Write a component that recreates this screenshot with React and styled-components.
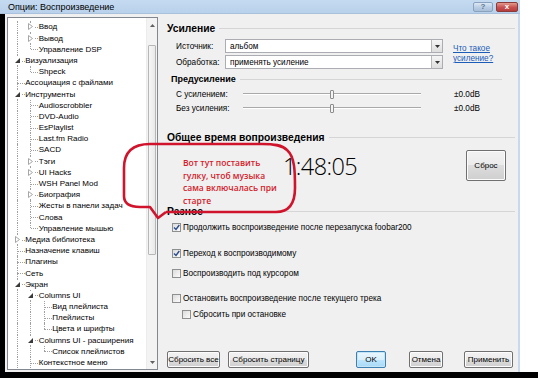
import React from 'react';
import styled, { createGlobalStyle } from 'styled-components';

const GlobalStyle = createGlobalStyle`
  html, body {
    margin: 0;
    padding: 0;
    background: #ffffff;
  }
  body {
    font-family: "Liberation Sans", Arial, sans-serif;
    color: #000;
  }
`;

const Page = styled.div`
  position: relative;
  width: 538px;
  height: 378px;
  display: flex;
  flex-direction: column;
  overflow: hidden;
  background: #fff;
`;

const Upper = styled.div`
  display: flex;
  height: 372px;
`;

const Outside = styled.div`
  flex: 1;
  background: #ffffff;
`;

const BottomBar = styled.div`
  height: 6px;
  background: #000;
`;

const Window = styled.div`
  width: 520px;
  display: flex;
  flex-direction: column;
  background: #f0f0f0;
`;

const TitleBar = styled.div`
  height: 14px;
  box-sizing: border-box;
  display: flex;
  align-items: center;
  padding: 0 2px 0 8px;
  background: linear-gradient(#c4daf1, #b9d1ea);
  border-bottom: 1px solid #a9c1db;
  font-size: 9px;
`;

const Title = styled.span`
  flex: 1;
`;

const CaptionButton = styled.div`
  width: ${(p) => (p.$close ? 22 : 20)}px;
  height: 10px;
  margin-left: ${(p) => (p.$close ? 3 : 0)}px;
  box-sizing: border-box;
  border: 1px solid ${(p) => (p.$close ? '#8b3a3a' : '#8aa2bd')};
  border-radius: 2px;
  background: ${(p) =>
    p.$close
      ? 'linear-gradient(#e29a8c, #c75050 55%, #b73d3d)'
      : 'linear-gradient(#dce8f5, #b9cde3 55%, #a9bfd8)'};
  color: ${(p) => (p.$close ? '#fff' : '#5d7590')};
  font-size: 8px;
  font-weight: bold;
  line-height: 8px;
  text-align: center;
`;

const Body = styled.div`
  flex: 1;
  display: flex;
  min-height: 0;
`;

const LeftEdge = styled.div`
  width: 5px;
  background: #000;
`;

const TreePanel = styled.div`
  margin: 3px 0 2px 2px;
  width: 151px;
  box-sizing: border-box;
  border: 1px solid #828790;
  background: #fff;
  display: flex;
`;

const TreeList = styled.div`
  flex: 1;
  padding: 3.4px 0 0 2.25px;
  overflow: hidden;
  font-size: 8px;
`;

const TreeRow = styled.div`
  display: flex;
  height: 11.2px;
`;

const Cell = styled.div`
  position: relative;
  width: 13.5px;
  flex-shrink: 0;
  display: flex;
  align-items: center;
  justify-content: center;

  &::before {
    content: '';
    display: ${(p) => (p.$up || p.$down ? 'block' : 'none')};
    position: absolute;
    left: 6.5px;
    top: ${(p) => (p.$up ? '0' : '50%')};
    bottom: ${(p) => (p.$down ? '0' : '50%')};
    border-left: 1px dotted #a0a0a0;
  }

  &::after {
    content: '';
    display: ${(p) => (p.$stub ? 'block' : 'none')};
    position: absolute;
    left: 7px;
    right: -1px;
    top: 50%;
    border-top: 1px dotted #a0a0a0;
  }
`;

const Expander = styled.span`
  position: relative;
  z-index: 1;
  display: flex;
  align-items: center;
  justify-content: center;
  width: 7px;
  height: 8px;
  background: #fff;
`;

const NodeLabel = styled.span`
  padding-left: 1.5px;
  line-height: 11.2px;
  white-space: nowrap;
`;

const Scrollbar = styled.div`
  width: 10px;
  background: #f3f3f3;
  border-left: 1px solid #ececec;
  display: flex;
  flex-direction: column;
  align-items: center;
`;

const ScrollArrow = styled.div`
  height: 14px;
  display: flex;
  align-items: center;
  justify-content: center;
`;

const ScrollThumb = styled.div`
  margin-top: 13px;
  width: 8px;
  height: 210px;
  box-sizing: border-box;
  border: 1px solid #b7b7b7;
  border-radius: 1px;
  background: linear-gradient(90deg, #f6f6f6, #e9e9e9);
`;

const ScrollSpacer = styled.div`
  flex: 1;
`;

const Content = styled.div`
  flex: 1;
  display: flex;
  flex-direction: column;
  padding: 8px 3px 4px 9px;
  border-right: 2px solid #c6d9ee;
  font-size: 8.2px;
`;

const GroupHeader = styled.div`
  display: flex;
  align-items: center;
  gap: 4px;
  height: 12px;
  margin: ${(p) => (p.$sub ? '0 13px 0 4px' : '0')};
  margin-top: ${(p) => p.$top || 0}px;
  font-weight: bold;
  font-size: ${(p) => (p.$sub ? 9 : 10.3)}px;
  white-space: nowrap;

  &::after {
    content: '';
    flex: 1;
    height: 1px;
    background: #d5d5d5;
  }
`;

const SourceBlock = styled.div`
  display: flex;
  align-items: center;
  margin: 5px 0 0 9px;
`;

const ComboColumn = styled.div`
  display: flex;
  flex-direction: column;
  gap: 2px;
`;

const FieldRow = styled.div`
  display: flex;
  align-items: center;
  height: ${(p) => p.$h || 14}px;
  margin-top: ${(p) => p.$top || 0}px;
  margin-left: ${(p) => p.$left || 0}px;
`;

const FieldLabel = styled.span`
  width: ${(p) => p.$w}px;
  flex-shrink: 0;
  white-space: nowrap;
`;

const Combo = styled.div`
  width: 218px;
  height: 14px;
  box-sizing: border-box;
  border: 1px solid #abadb3;
  background: #fff;
  display: flex;
  align-items: center;
`;

const ComboText = styled.span`
  flex: 1;
  padding-left: 4px;
`;

const ComboButton = styled.span`
  width: 11px;
  height: 100%;
  box-sizing: border-box;
  border-left: 1px solid #b8b8b8;
  background: linear-gradient(#f5f5f5, #dedede);
  display: flex;
  align-items: center;
  justify-content: center;
`;

const HelpLink = styled.a`
  margin-left: 10px;
  color: #1b5cb8;
  text-decoration: underline;
  line-height: 10.5px;
  font-size: 8.2px;
`;

const Track = styled.div`
  width: 178px;
  height: 10px;
  display: flex;
  align-items: center;
  justify-content: center;
  background: linear-gradient(
    transparent 4px,
    #a9a9a9 4px,
    #a9a9a9 5px,
    #ffffff 5px,
    #ffffff 6px,
    transparent 6px
  );
`;

const Thumb = styled.div`
  width: 4px;
  height: 9px;
  box-sizing: border-box;
  border: 1px solid #8c8c8c;
  border-radius: 1px;
  background: #f4f4f4;
`;

const Value = styled.span`
  margin-left: 33px;
`;

const TimeRow = styled.div`
  display: flex;
  align-items: center;
  height: 31px;
  margin-top: 7px;
`;

const TimeText = styled.span`
  margin-left: 116px;
  font-family: "Open Sans", "Liberation Sans", sans-serif;
  font-weight: 300;
  font-size: 23.5px;
  letter-spacing: -0.6px;
`;

const Button = styled.button`
  width: ${(p) => p.$w}px;
  height: ${(p) => p.$h || 17}px;
  margin-left: ${(p) => (p.$auto ? 'auto' : `${p.$gap || 0}px`)};
  margin-right: ${(p) => p.$right || 0}px;
  padding: 0;
  box-sizing: border-box;
  border: 1px solid ${(p) => (p.$primary ? '#3c7fb1' : '#707070')};
  border-radius: 2px;
  background: ${(p) =>
    p.$primary
      ? 'linear-gradient(#eaf6fd, #d9f0fc 50%, #bee6fd 50%, #a7d9f5)'
      : 'linear-gradient(#f2f2f2, #ebebeb 50%, #dddddd 50%, #cfcfcf)'};
  box-shadow: inset 0 0 0 1px ${(p) => (p.$primary ? '#c4e5f6' : '#fcfcfc')};
  font-family: "Liberation Sans", Arial, sans-serif;
  font-size: 8px;
  white-space: nowrap;
  color: #000;
`;

const CheckRow = styled.div`
  display: flex;
  align-items: center;
  gap: 2px;
  height: 10px;
  margin-top: ${(p) => p.$top}px;
  margin-left: ${(p) => (p.$indent ? 15 : 5)}px;
  white-space: nowrap;
`;

const Box = styled.span`
  width: 9px;
  height: 9px;
  box-sizing: border-box;
  border: 1px solid #8e8f8f;
  background: linear-gradient(135deg, #dcdcdc, #fbfbfb);
  display: flex;
  align-items: center;
  justify-content: center;
  flex-shrink: 0;
`;

const ButtonBar = styled.div`
  display: flex;
  margin-top: auto;
`;

const Note = styled.div`
  position: absolute;
  left: 183px;
  top: 157px;
  font-family: "Open Sans", "Liberation Sans", sans-serif;
  font-weight: 600;
  font-size: 8.5px;
  line-height: 12.6px;
  color: #d4202a;
  white-space: nowrap;
`;

const Scribble = styled.svg`
  position: absolute;
  left: 0;
  top: 0;
  pointer-events: none;
`;

const rows = [
  [1, 'Ввод', 'closed'],
  [1, 'Вывод', 'closed'],
  [1, 'Управление DSP'],
  [0, 'Визуализация', 'open'],
  [1, 'Shpeck'],
  [0, 'Ассоциация с файлами'],
  [0, 'Инструменты', 'open'],
  [1, 'Audioscrobbler'],
  [1, 'DVD-Audio'],
  [1, 'EsPlaylist'],
  [1, 'Last.fm Radio'],
  [1, 'SACD'],
  [1, 'Тэги', 'closed'],
  [1, 'UI Hacks', 'closed'],
  [1, 'WSH Panel Mod'],
  [1, 'Биография', 'closed'],
  [1, 'Жесты в панели задач'],
  [1, 'Слова'],
  [1, 'Управление мышью'],
  [0, 'Медиа библиотека', 'closed'],
  [0, 'Назначение клавиш'],
  [0, 'Плагины'],
  [0, 'Сеть'],
  [0, 'Экран', 'open'],
  [1, 'Columns UI', 'open'],
  [2, 'Вид плейлиста'],
  [2, 'Плейлисты'],
  [2, 'Цвета и шрифты'],
  [1, 'Columns UI - расширения', 'open'],
  [2, 'Список плейлистов'],
  [1, 'Контекстное меню'],
];

// rows below the visible part, only so the guide lines run on
const levels = [...rows.map((r) => r[0]), 1, 0];

const continues = (i, d) => {
  for (let j = i + 1; j < levels.length; j++) {
    if (levels[j] < d) return false;
    if (levels[j] === d) return true;
  }
  return false;
};

const Triangle = ({ state }) =>
  state === 'open' ? (
    <svg width="5" height="5" viewBox="0 0 5 5">
      <path d="M5 0 L5 5 L0 5 Z" fill="#3a3a3a" />
    </svg>
  ) : (
    <svg width="5" height="7" viewBox="0 0 5 7">
      <path d="M0.5 0.5 L4.5 3.5 L0.5 6.5 Z" fill="none" stroke="#a6a6a6" strokeWidth="1" />
    </svg>
  );

const Arrow = ({ down }) => (
  <svg width="5" height="3" viewBox="0 0 5 3">
    <path d={down ? 'M0 0 L5 0 L2.5 3 Z' : 'M0 3 L5 3 L2.5 0 Z'} fill="#606060" />
  </svg>
);

const DropArrow = () => (
  <svg width="5" height="3" viewBox="0 0 5 3">
    <path d="M0 0 L5 0 L2.5 3 Z" fill="#333" />
  </svg>
);

const Tick = () => (
  <svg width="7" height="7" viewBox="0 0 7 7">
    <path d="M1 3.5 L3 5.5 L6.3 1" fill="none" stroke="#2a4d8f" strokeWidth="1.4" />
  </svg>
);

const Check = ({ checked, indent, top, children }) => (
  <CheckRow $indent={indent} $top={top}>
    <Box>{checked && <Tick />}</Box>
    <span>{children}</span>
  </CheckRow>
);

const Tree = () => (
  <TreePanel>
    <TreeList>
      {rows.map(([level, text, exp], i) => (
        <TreeRow key={text}>
          {Array.from({ length: level + 1 }, (_, d) => {
            const own = d === level;
            const down = continues(i, d);
            return (
              <Cell key={d} $up={own || down} $down={down} $stub={own}>
                {own && exp && (
                  <Expander>
                    <Triangle state={exp} />
                  </Expander>
                )}
              </Cell>
            );
          })}
          <NodeLabel>{text}</NodeLabel>
        </TreeRow>
      ))}
    </TreeList>
    <Scrollbar>
      <ScrollArrow>
        <Arrow />
      </ScrollArrow>
      <ScrollThumb />
      <ScrollSpacer />
      <ScrollArrow>
        <Arrow down />
      </ScrollArrow>
    </Scrollbar>
  </TreePanel>
);

const App = () => (
  <>
    <GlobalStyle />
    <Page>
      <Upper>
        <Window>
          <TitleBar>
            <Title>Опции: Воспроизведение</Title>
            <CaptionButton>?</CaptionButton>
            <CaptionButton $close>x</CaptionButton>
          </TitleBar>
          <Body>
            <LeftEdge />
            <Tree />
            <Content>
              <GroupHeader>Усиление</GroupHeader>
              <SourceBlock>
                <ComboColumn>
                  <FieldRow>
                    <FieldLabel $w={49}>Источник:</FieldLabel>
                    <Combo>
                      <ComboText>альбом</ComboText>
                      <ComboButton>
                        <DropArrow />
                      </ComboButton>
                    </Combo>
                  </FieldRow>
                  <FieldRow>
                    <FieldLabel $w={49}>Обработка:</FieldLabel>
                    <Combo>
                      <ComboText>применять усиление</ComboText>
                      <ComboButton>
                        <DropArrow />
                      </ComboButton>
                    </Combo>
                  </FieldRow>
                </ComboColumn>
                <HelpLink>
                  Что такое
                  <br />
                  усиление?
                </HelpLink>
              </SourceBlock>

              <GroupHeader $sub $top={4}>
                Предусиление
              </GroupHeader>
              <FieldRow $h={10} $top={4} $left={9}>
                <FieldLabel $w={67}>С усилением:</FieldLabel>
                <Track>
                  <Thumb />
                </Track>
                <Value>±0.0dB</Value>
              </FieldRow>
              <FieldRow $h={10} $top={4} $left={9}>
                <FieldLabel $w={67}>Без усиления:</FieldLabel>
                <Track>
                  <Thumb />
                </Track>
                <Value>±0.0dB</Value>
              </FieldRow>

              <GroupHeader $top={18}>Общее время вопроизведения</GroupHeader>
              <TimeRow>
                <TimeText>1:48:05</TimeText>
                <Button $w={40} $h={31} $auto $right={9}>
                  Сброс
                </Button>
              </TimeRow>

              <GroupHeader $top={24}>Разное</GroupHeader>
              <Check checked top={5}>
                Продолжить воспроизведение после перезапуска foobar200
              </Check>
              <Check checked top={16}>
                Переход к воспроизводимому
              </Check>
              <Check top={10}>Воспроизводить под курсором</Check>
              <Check top={15}>Остановить воспроизведение после текущего трека</Check>
              <Check indent top={6}>
                Сбросить при остановке
              </Check>

              <ButtonBar>
                <Button $w={53}>Сбросить все</Button>
                <Button $w={81} $gap={8}>
                  Сбросить страницу
                </Button>
                <Button $w={30} $auto $primary>
                  OK
                </Button>
                <Button $w={34} $gap={23}>
                  Отмена
                </Button>
                <Button $w={49} $gap={21} $right={2}>
                  Применить
                </Button>
              </ButtonBar>
            </Content>
          </Body>
        </Window>
        <Outside />
      </Upper>
      <BottomBar />
      <Scribble width="538" height="378">
        <path
          d="M166 212 L276 212 C290 212 295 202 295 188 C295 172 295 157 287 150 C282 145 274 144 262 144 L150 144 C133 144 124 152 124 168 L124 196 C124 204 130 207 140 207 L150 207 L158 218 L166 212"
          fill="none"
          stroke="#d0142c"
          strokeWidth="2.6"
          strokeLinejoin="round"
        />
      </Scribble>
      <Note>
        Вот тут поставить
        <br />
        гулку, чтоб музыка
        <br />
        сама включалась при
        <br />
        старте
      </Note>
    </Page>
  </>
);

export default App;
